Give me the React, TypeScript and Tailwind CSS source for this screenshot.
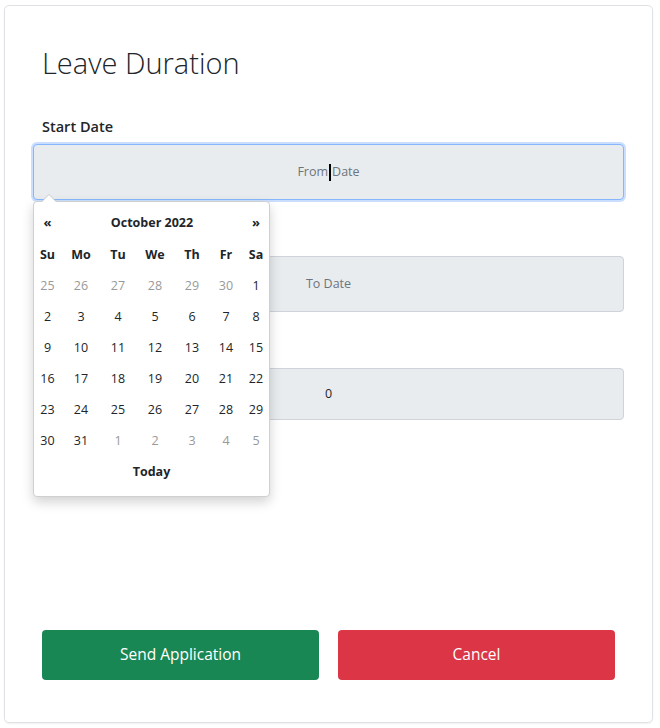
import React from 'react';

const FONT = "font-['Open_Sans','Noto_Sans',sans-serif]";

const DOW = ['Su', 'Mo', 'Tu', 'We', 'Th', 'Fr', 'Sa'];

const WEEKS: { d: number; muted?: boolean }[][] = [
  [{ d: 25, muted: true }, { d: 26, muted: true }, { d: 27, muted: true }, { d: 28, muted: true }, { d: 29, muted: true }, { d: 30, muted: true }, { d: 1 }],
  [{ d: 2 }, { d: 3 }, { d: 4 }, { d: 5 }, { d: 6 }, { d: 7 }, { d: 8 }],
  [{ d: 9 }, { d: 10 }, { d: 11 }, { d: 12 }, { d: 13 }, { d: 14 }, { d: 15 }],
  [{ d: 16 }, { d: 17 }, { d: 18 }, { d: 19 }, { d: 20 }, { d: 21 }, { d: 22 }],
  [{ d: 23 }, { d: 24 }, { d: 25 }, { d: 26 }, { d: 27 }, { d: 28 }, { d: 29 }],
  [{ d: 30 }, { d: 31 }, { d: 1, muted: true }, { d: 2, muted: true }, { d: 3, muted: true }, { d: 4, muted: true }, { d: 5, muted: true }],
];

const COLS = 'grid grid-cols-[27px_40px_34px_40px_34px_34px_26px]';

const DatePicker: React.FC = () => (
  <div className="absolute left-[0px] top-[calc(100%+1px)] z-10 w-[237px] rounded-[4px] border border-[#d0d0d0] bg-white pt-[5px] pb-[8px] text-[12.5px] text-[#212529] shadow-[0_5px_12px_rgba(0,0,0,0.18)]">
    {/* little arrow */}
    <div className="absolute -top-[8px] left-[7px] h-0 w-0 border-x-[8px] border-b-[8px] border-x-transparent border-b-[#c8c8c8]" />
    <div className="absolute -top-[7px] left-[8px] h-0 w-0 border-x-[7px] border-b-[7px] border-x-transparent border-b-white" />

    <div className={`${COLS} h-[32px] items-center text-center`}>
      <span className="text-[13px] font-bold">«</span>
      <span className="col-span-5 font-bold">October 2022</span>
      <span className="text-[13px] font-bold">»</span>
    </div>
    <div className={`${COLS} h-[32px] items-center text-center font-bold`}>
      {DOW.map((d) => (
        <span key={d}>{d}</span>
      ))}
    </div>
    {WEEKS.map((week, i) => (
      <div key={i} className={`${COLS} h-[31px] items-center text-center`}>
        {week.map((c, j) => (
          <span key={j} className={c.muted ? 'text-[#999]' : ''}>
            {c.d}
          </span>
        ))}
      </div>
    ))}
    <div className="flex h-[31px] items-center justify-center font-bold">Today</div>
  </div>
);

const Field: React.FC<{
  label: string;
  height: string;
  focused?: boolean;
  picker?: boolean;
  children: React.ReactNode;
}> = ({ label, height, focused, picker, children }) => (
  <div className="mb-[27px]">
    <label className="mb-[5px] block h-[24px] text-[14.5px] leading-[24px] font-semibold text-[#212529]">{label}</label>
    <div className="relative -ml-[9px] w-[591px]">
      <div
        className={`flex items-center justify-center rounded-[4px] border bg-[#e9ecef] text-[12.5px] text-[#6c757d] ${height} ${
          focused ? 'border-[#86b7fe] shadow-[0_0_0_2px_rgba(13,110,253,0.22)]' : 'border-[#ced4da]'
        }`}>
        {children}
      </div>
      {picker && <DatePicker />}
    </div>
  </div>
);

export default function App() {
  return (
    <div className={`${FONT} min-h-[728px] bg-white pt-[5px] pl-[4px]`}>
      <div className="h-[718px] w-[649px] rounded-[5px] border border-[#dee2e6] px-[37px] shadow-[0_1px_2px_rgba(0,0,0,0.06)]">
        <h1 className="mt-[38px] text-[29px] leading-[38px] font-light text-[#212529]">Leave Duration</h1>

        <div className="mt-[33px]">
          <div className="relative z-10">
            <Field label="Start Date" height="h-[56px]" focused picker>
              <span>From</span>
              <span className="mx-[1px] inline-block h-[17px] w-[2px] bg-black" />
              <span>Date</span>
            </Field>
          </div>
          <Field label="End Date" height="h-[56px]">
            <span>To Date</span>
          </Field>
          <Field label="Number of Days" height="h-[52px]">
            <span className="text-[#212529]">0</span>
          </Field>
        </div>

        <div className="mt-[210px] flex gap-[19px]">
          <button className="h-[50px] w-[277px] rounded-[4px] bg-[#198754] text-[15.5px] text-white">Send Application</button>
          <button className="h-[50px] w-[277px] rounded-[4px] bg-[#dc3545] text-[15.5px] text-white">Cancel</button>
        </div>
      </div>
    </div>
  );
}
